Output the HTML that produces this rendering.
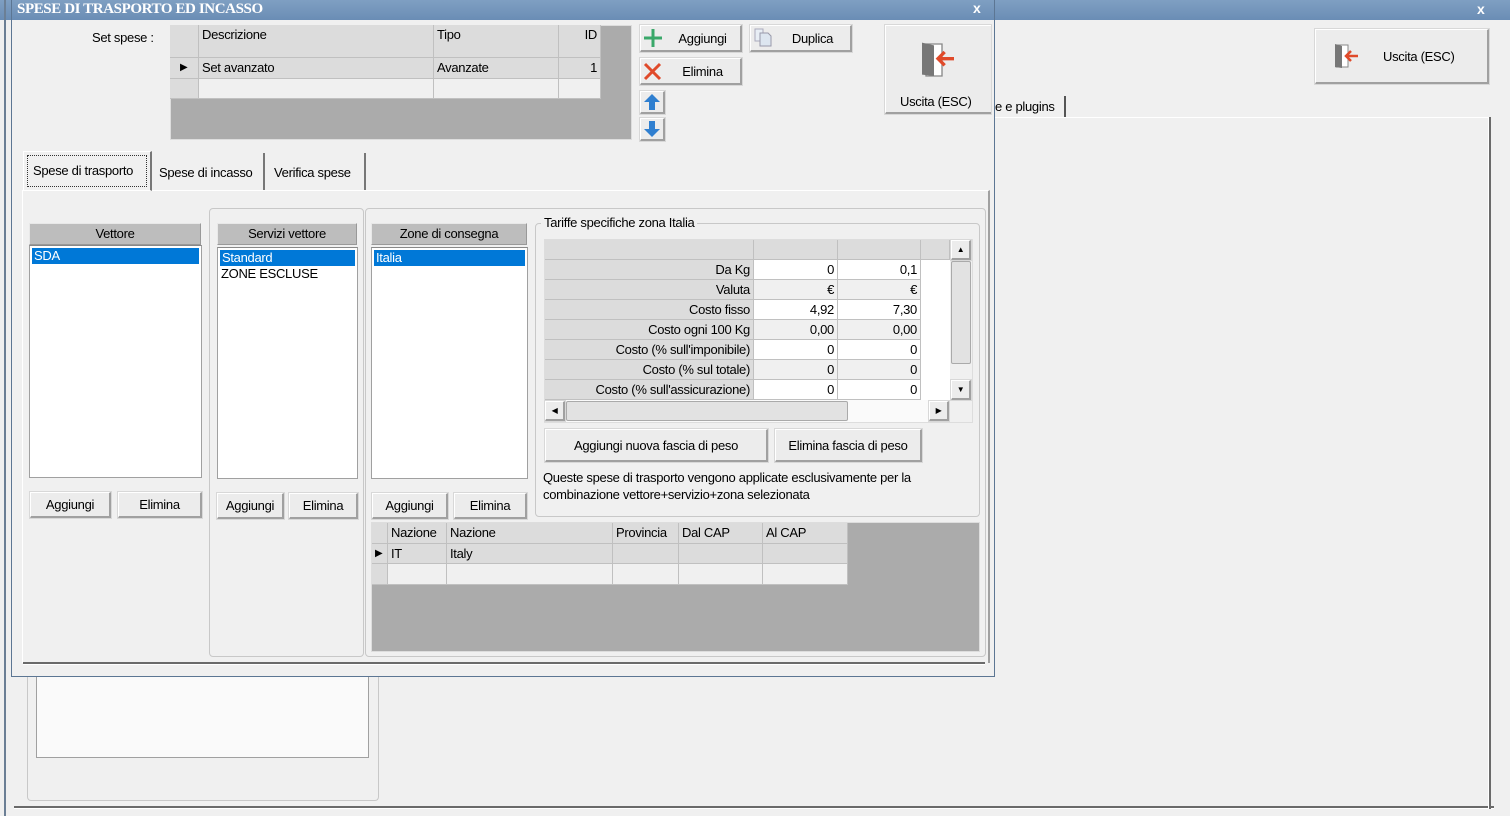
<!DOCTYPE html>
<html><head><meta charset="utf-8"><style>
*{box-sizing:border-box;margin:0;padding:0}
body{width:1510px;height:816px;background:#f0f0f0;position:relative;overflow:hidden;font-family:"Liberation Sans",sans-serif;font-size:13px;color:#000;letter-spacing:-0.3px}
.a{position:absolute}
.btn{position:absolute;background:#ececec;border:1px solid #fff;border-right:2px solid #a0a0a0;border-bottom:2px solid #a0a0a0;box-shadow:0 0 0 1px #d8d8d8;display:flex;align-items:center;justify-content:center;white-space:nowrap}
.tb{background:linear-gradient(#7f9fc2,#6a8db5);height:20px}
.hdr{position:absolute;background:#bdbdbd;border:1px solid #e8e8e8;border-right-color:#999;border-bottom-color:#999;text-align:center;line-height:19px}
.list{position:absolute;background:#fff;border:1px solid #a0a0a0;border-top-color:#888}
.sel{background:#0078d7;color:#fff;height:16px;line-height:16px;padding-left:2px;margin:2px 2px 0 2px}
.grp{position:absolute;border:1px solid #c8c8c8;border-radius:4px}
.cell{position:absolute;border-right:1px solid #c0c0c0;border-bottom:1px solid #c0c0c0;white-space:nowrap;overflow:hidden;padding:0 3px}
.g{background:#dcdcdc}
.w{background:#fff}
.l{background:#f0f0f0}
</style></head><body>
<!-- background window -->
<div class="a tb" style="left:0;top:0;width:1510px"></div>
<div class="a" style="left:1477px;top:1px;color:#fff;font-weight:bold;font-size:14px">x</div>
<div class="a" style="left:4px;top:0;width:2px;height:816px;background:#6b7f95"></div>
<div class="a" style="left:14px;top:806px;width:1480px;height:3px;border-top:2px solid #6a6a6a;border-bottom:1px solid #fff"></div>
<div class="a" style="left:1488px;top:117px;width:3px;height:692px;border-left:1px solid #fff;border-right:2px solid #6a6a6a"></div>
<div class="a" style="left:995px;top:117px;width:494px;height:1px;background:#fff"></div>
<div class="a" style="left:995px;top:99px">e e plugins</div>
<div class="a" style="left:1064px;top:96px;width:2px;height:21px;background:#555"></div>
<div class="btn" style="left:1315px;top:29px;width:174px;height:55px;justify-content:flex-start">
<svg class="a" style="left:16px;top:11px" width="30" height="30" viewBox="0 0 30 30"><path d="M4 4h12v22H4z" fill="#fff" stroke="#888"/><path d="M3 3l7 2v22l-7-1z" fill="#777"/><path d="M26 15H15M19 10l-5 5 5 5" stroke="#e04a2a" stroke-width="2.5" fill="none"/></svg>
<span class="a" style="left:67px;top:19px">Uscita (ESC)</span></div>
<div class="grp" style="left:27px;top:660px;width:352px;height:141px;border-radius:0 0 4px 4px;border-top:none"></div>
<div class="a" style="left:36px;top:660px;width:333px;height:98px;background:#fafafa;border:1px solid #a0a0a0"></div>

<!-- dialog -->
<div class="a" style="left:11px;top:0;width:984px;height:677px;background:#f0f0f0;border:1px solid #5c7693;border-top:none">
<div class="a tb" style="left:0;top:0;width:982px"></div>
<div class="a" style="left:5px;top:1px;color:#fff;font-weight:bold;font-size:15px;font-family:'Liberation Serif',serif;letter-spacing:-0.4px">SPESE DI TRASPORTO ED INCASSO</div>
<div class="a" style="left:961px;top:0px;color:#fff;font-weight:bold;font-size:14px">x</div>
<div class="a" style="left:11px;top:662px;width:962px;height:3px;border-top:2px solid #6a6a6a;border-bottom:1px solid #fff"></div>
</div>
<div class="a" style="left:-6px;top:3px;color:#ccc;font-size:13px">(</div>

<div class="a" style="left:92px;top:30px">Set spese :</div>
<!-- top grid -->
<div class="a" style="left:170px;top:25px;width:462px;height:115px;background:#ababab;border:1px solid #ddd"></div>
<div class="cell g" style="left:170px;top:25px;width:29px;height:33px"></div>
<div class="cell g" style="left:199px;top:25px;width:235px;height:33px;padding-top:2px">Descrizione</div>
<div class="cell g" style="left:434px;top:25px;width:125px;height:33px;padding-top:2px">Tipo</div>
<div class="cell g" style="left:559px;top:25px;width:42px;height:33px;padding-top:2px;text-align:right">ID</div>
<div class="cell g" style="left:170px;top:58px;width:29px;height:21px;line-height:20px;padding-left:10px;font-size:10px">&#9654;</div>
<div class="cell g" style="left:199px;top:58px;width:235px;height:21px;line-height:20px">Set avanzato</div>
<div class="cell g" style="left:434px;top:58px;width:125px;height:21px;line-height:20px">Avanzate</div>
<div class="cell g" style="left:559px;top:58px;width:42px;height:21px;line-height:20px;text-align:right">1</div>
<div class="cell g" style="left:170px;top:79px;width:29px;height:20px"></div>
<div class="cell l" style="left:199px;top:79px;width:235px;height:20px"></div>
<div class="cell l" style="left:434px;top:79px;width:125px;height:20px"></div>
<div class="cell l" style="left:559px;top:79px;width:42px;height:20px"></div>

<div class="btn" style="left:640px;top:25px;width:102px;height:27px"><svg class="a" style="left:1px;top:1px" width="22" height="22"><path d="M11 2v18M2 11h18" stroke="#3aa86a" stroke-width="3"/></svg><span style="margin-left:24px">Aggiungi</span></div>
<div class="btn" style="left:750px;top:25px;width:102px;height:27px"><svg class="a" style="left:2px;top:2px" width="20" height="20"><path d="M2 1h8v12H2z" fill="#e8eef5" stroke="#aab"/><path d="M7 5h8l3 3v10H7z" fill="#dde6f0" stroke="#99a"/></svg><span style="margin-left:24px">Duplica</span></div>
<div class="btn" style="left:640px;top:58px;width:102px;height:27px"><svg class="a" style="left:1px;top:2px" width="22" height="22"><path d="M3 3l15 15M18 3L3 18" stroke="#e04a2a" stroke-width="3"/></svg><span style="margin-left:24px">Elimina</span></div>
<div class="btn" style="left:640px;top:91px;width:25px;height:23px"><svg width="20" height="20"><path d="M10 2l8 8h-5v8H7v-8H2z" fill="#2f7fd0"/></svg></div>
<div class="btn" style="left:640px;top:118px;width:25px;height:23px"><svg width="20" height="20"><path d="M10 18l8-8h-5V2H7v8H2z" fill="#2f7fd0"/></svg></div>
<div class="btn" style="left:885px;top:25px;width:106px;height:89px;border-right:none;align-items:flex-start">
<svg class="a" style="left:32px;top:14px" width="40" height="40" viewBox="0 0 30 30"><path d="M6 3h12v24H6z" fill="#fff" stroke="#888"/><path d="M3 2l9 2v23l-9-1z" fill="#777"/><path d="M27 14H15M20 9l-5 5 5 5" stroke="#e04a2a" stroke-width="2.5" fill="none"/></svg>
<span class="a" style="left:14px;top:68px">Uscita (ESC)</span></div>

<!-- tabs -->
<div class="a" style="left:22px;top:190px;width:968px;height:473px;border-left:1px solid #fff;border-top:1px solid #fff;border-right:2px solid #a0a0a0"></div>
<div class="a" style="left:23px;top:151px;width:129px;height:40px;background:#f0f0f0;border:1px solid #fff;border-right:2px solid #777"><div style="margin:3px;border:1px dotted #333;height:32px;line-height:30px;padding-left:5px">Spese di trasporto</div></div>
<div class="a" style="left:153px;top:153px;width:112px;height:37px;border-right:2px solid #777;line-height:40px;padding-left:6px">Spese di incasso</div>
<div class="a" style="left:266px;top:153px;width:100px;height:37px;border-right:2px solid #777;line-height:40px;padding-left:8px">Verifica spese</div>

<!-- vettore -->
<div class="hdr" style="left:29px;top:223px;width:172px;height:22px">Vettore</div>
<div class="list" style="left:29px;top:245px;width:173px;height:233px"><div class="sel">SDA</div></div>
<div class="btn" style="left:30px;top:492px;width:81px;height:26px">Aggiungi</div>
<div class="btn" style="left:118px;top:492px;width:84px;height:26px">Elimina</div>

<div class="grp" style="left:209px;top:208px;width:155px;height:449px"></div>
<div class="hdr" style="left:217px;top:223px;width:140px;height:22px">Servizi vettore</div>
<div class="list" style="left:217px;top:247px;width:141px;height:232px"><div class="sel">Standard</div><div style="padding-left:3px;line-height:16px">ZONE ESCLUSE</div></div>
<div class="btn" style="left:217px;top:493px;width:67px;height:26px">Aggiungi</div>
<div class="btn" style="left:289px;top:493px;width:69px;height:26px">Elimina</div>

<div class="grp" style="left:365px;top:208px;width:621px;height:449px"></div>
<div class="hdr" style="left:371px;top:223px;width:156px;height:22px">Zone di consegna</div>
<div class="list" style="left:371px;top:247px;width:157px;height:232px"><div class="sel">Italia</div></div>
<div class="btn" style="left:372px;top:493px;width:76px;height:26px">Aggiungi</div>
<div class="btn" style="left:454px;top:493px;width:73px;height:26px">Elimina</div>

<!-- tariffe -->
<div class="grp" style="left:535px;top:223px;width:445px;height:294px"></div>
<div class="a" style="left:541px;top:215px;background:#f0f0f0;padding:0 3px">Tariffe specifiche zona Italia</div>
<div class="a" style="left:544px;top:239px;width:429px;height:184px;background:#f0f0f0;border:1px solid #ddd"></div>
<div class="cell g" style="left:545px;top:240px;width:209px;height:20px"></div>
<div class="cell g" style="left:754px;top:240px;width:84px;height:20px"></div>
<div class="cell g" style="left:838px;top:240px;width:83px;height:20px"></div>
<div class="cell g" style="left:921px;top:240px;width:29px;height:20px"></div>
<div class="a" style="left:545px;top:260px">
<div class="cell g" style="left:0;top:0;width:209px;height:20px;text-align:right;line-height:19px">Da Kg</div>
<div class="cell g" style="left:0;top:20px;width:209px;height:20px;text-align:right;line-height:19px">Valuta</div>
<div class="cell g" style="left:0;top:40px;width:209px;height:20px;text-align:right;line-height:19px">Costo fisso</div>
<div class="cell g" style="left:0;top:60px;width:209px;height:20px;text-align:right;line-height:19px">Costo ogni 100 Kg</div>
<div class="cell g" style="left:0;top:80px;width:209px;height:20px;text-align:right;line-height:19px">Costo (% sull'imponibile)</div>
<div class="cell g" style="left:0;top:100px;width:209px;height:20px;text-align:right;line-height:19px">Costo (% sul totale)</div>
<div class="cell g" style="left:0;top:120px;width:209px;height:20px;text-align:right;line-height:19px">Costo (% sull'assicurazione)</div>
<div class="cell w" style="left:209px;top:0;width:84px;height:20px;text-align:right;line-height:19px">0</div>
<div class="cell l" style="left:209px;top:20px;width:84px;height:20px;text-align:right;line-height:19px">€</div>
<div class="cell w" style="left:209px;top:40px;width:84px;height:20px;text-align:right;line-height:19px">4,92</div>
<div class="cell l" style="left:209px;top:60px;width:84px;height:20px;text-align:right;line-height:19px">0,00</div>
<div class="cell w" style="left:209px;top:80px;width:84px;height:20px;text-align:right;line-height:19px">0</div>
<div class="cell l" style="left:209px;top:100px;width:84px;height:20px;text-align:right;line-height:19px">0</div>
<div class="cell w" style="left:209px;top:120px;width:84px;height:20px;text-align:right;line-height:19px">0</div>
<div class="cell w" style="left:293px;top:0;width:83px;height:20px;text-align:right;line-height:19px">0,1</div>
<div class="cell l" style="left:293px;top:20px;width:83px;height:20px;text-align:right;line-height:19px">€</div>
<div class="cell w" style="left:293px;top:40px;width:83px;height:20px;text-align:right;line-height:19px">7,30</div>
<div class="cell l" style="left:293px;top:60px;width:83px;height:20px;text-align:right;line-height:19px">0,00</div>
<div class="cell w" style="left:293px;top:80px;width:83px;height:20px;text-align:right;line-height:19px">0</div>
<div class="cell l" style="left:293px;top:100px;width:83px;height:20px;text-align:right;line-height:19px">0</div>
<div class="cell w" style="left:293px;top:120px;width:83px;height:20px;text-align:right;line-height:19px">0</div>
<div class="a w" style="left:376px;top:0;width:29px;height:140px"></div>
</div>
<!-- vscroll -->
<div class="a" style="left:950px;top:240px;width:22px;height:160px;background:#f0f0f0"></div>
<div class="btn" style="left:951px;top:240px;width:20px;height:20px;font-size:8px">▲</div>
<div class="a" style="left:951px;top:261px;width:20px;height:103px;background:#e2e2e2;border:1px solid #aaa;border-radius:2px"></div>
<div class="btn" style="left:951px;top:380px;width:20px;height:20px;font-size:8px">▼</div>
<!-- hscroll -->
<div class="a" style="left:545px;top:400px;width:405px;height:22px;background:#fafafa"></div>
<div class="btn" style="left:545px;top:401px;width:20px;height:20px;font-size:8px">◀</div>
<div class="a" style="left:566px;top:401px;width:282px;height:20px;background:#e2e2e2;border:1px solid #aaa;border-radius:2px"></div>
<div class="btn" style="left:929px;top:401px;width:20px;height:20px;font-size:8px">▶</div>

<div class="btn" style="left:545px;top:429px;width:223px;height:33px">Aggiungi nuova fascia di peso</div>
<div class="btn" style="left:775px;top:429px;width:147px;height:33px">Elimina fascia di peso</div>
<div class="a" style="left:543px;top:469px;line-height:17px;width:430px">Queste spese di trasporto vengono applicate esclusivamente per la combinazione vettore+servizio+zona selezionata</div>

<!-- bottom grid -->
<div class="a" style="left:371px;top:522px;width:609px;height:130px;background:#ababab;border:1px solid #ddd"></div>
<div class="cell g" style="left:372px;top:523px;width:16px;height:21px"></div>
<div class="cell g" style="left:388px;top:523px;width:59px;height:21px;line-height:20px">Nazione</div>
<div class="cell g" style="left:447px;top:523px;width:166px;height:21px;line-height:20px">Nazione</div>
<div class="cell g" style="left:613px;top:523px;width:66px;height:21px;line-height:20px">Provincia</div>
<div class="cell g" style="left:679px;top:523px;width:84px;height:21px;line-height:20px">Dal CAP</div>
<div class="cell g" style="left:763px;top:523px;width:85px;height:21px;line-height:20px">Al CAP</div>
<div class="cell g" style="left:372px;top:544px;width:16px;height:20px;font-size:10px;line-height:20px;padding-left:3px">&#9654;</div>
<div class="cell g" style="left:388px;top:544px;width:59px;height:20px;line-height:20px">IT</div>
<div class="cell g" style="left:447px;top:544px;width:166px;height:20px;line-height:20px">Italy</div>
<div class="cell g" style="left:613px;top:544px;width:66px;height:20px"></div>
<div class="cell g" style="left:679px;top:544px;width:84px;height:20px"></div>
<div class="cell g" style="left:763px;top:544px;width:85px;height:20px"></div>
<div class="cell g" style="left:372px;top:564px;width:16px;height:21px"></div>
<div class="cell l" style="left:388px;top:564px;width:59px;height:21px"></div>
<div class="cell l" style="left:447px;top:564px;width:166px;height:21px"></div>
<div class="cell l" style="left:613px;top:564px;width:66px;height:21px"></div>
<div class="cell l" style="left:679px;top:564px;width:84px;height:21px"></div>
<div class="cell l" style="left:763px;top:564px;width:85px;height:21px"></div>
</body></html>
